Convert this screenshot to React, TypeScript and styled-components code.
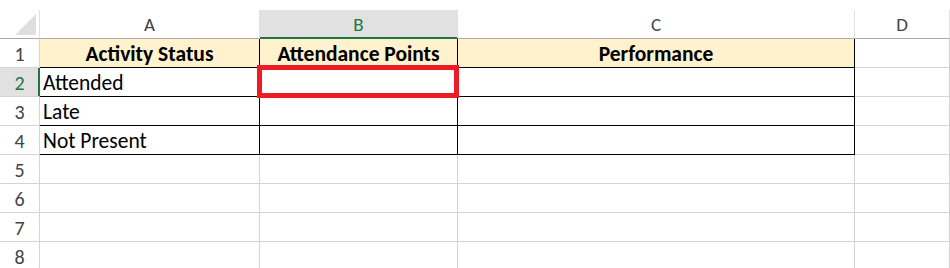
import React from "react";
import styled, { createGlobalStyle, css } from "styled-components";

const Global = createGlobalStyle`
  html, body { margin: 0; padding: 0; background: #fff; overflow: hidden; }
  body { width: 950px; height: 268px; font-family: Carlito, Lato, "Liberation Sans", sans-serif; }
`;

const GRID = "#d4d4d4";
const HEAD_LINE = "#e1e1e1";
const HEAD_BOTTOM = "#ababab";
const GREEN = "#217346";

const Sheet = styled.div`
  margin-top: 10px;
  display: grid;
  grid-template-columns: 40px 220px 198px 397px 1fr;
  grid-auto-rows: 29px;
`;

const Corner = styled.div`
  box-sizing: border-box;
  border-right: 1px solid ${HEAD_LINE};
  border-bottom: 1px solid ${HEAD_BOTTOM};
  display: flex;
  align-items: flex-end;
  justify-content: flex-end;
  padding: 0 3px 3px 0;
`;

const ColHeader = styled.div<{ $selected?: boolean }>`
  box-sizing: border-box;
  border-right: 1px solid ${HEAD_LINE};
  border-bottom: 1px solid ${HEAD_BOTTOM};
  display: flex;
  align-items: center;
  justify-content: center;
  font-size: 19px;
  color: #444;
  padding-top: 1px;
  ${(p) =>
    p.$selected &&
    css`
      background: #e1e1e1;
      color: ${GREEN};
      border-bottom: 2px solid ${GREEN};
      padding-top: 2px;
    `}
`;

const RowHeader = styled.div<{ $selected?: boolean }>`
  box-sizing: border-box;
  border-right: 1px solid ${GRID};
  border-bottom: 1px solid ${GRID};
  display: flex;
  align-items: center;
  justify-content: center;
  font-size: 20px;
  color: #444;
  padding-top: 2px;
  ${(p) =>
    p.$selected &&
    css`
      background: #e1e1e1;
      color: ${GREEN};
      box-shadow: inset -1px 0 0 ${GREEN};
      border-right-color: ${GREEN};
    `}
`;

const Cell = styled.div<{ $table?: boolean; $head?: boolean }>`
  position: relative;
  box-sizing: border-box;
  border-right: 1px solid ${(p) => (p.$table ? "#000" : GRID)};
  border-bottom: 1px solid ${(p) => (p.$table ? "#000" : GRID)};
  display: flex;
  align-items: center;
  padding: 2px 0 0 3px;
  font-size: 21.5px;
  color: #000;
  white-space: nowrap;
  ${(p) =>
    p.$head &&
    css`
      background: #fff2cc;
      font-weight: 700;
      justify-content: center;
      padding-left: 0;
    `}
`;

const Selection = styled.div`
  position: absolute;
  top: -3px;
  left: -3px;
  right: -2px;
  bottom: -2px;
  border: 5px solid #ed1c24;
  z-index: 2;
`;

const cols = ["A", "B", "C", "D"];
const headers = ["Activity Status", "Attendance Points", "Performance"];
const statuses = ["Attended", "Late", "Not Present"];

export default function App() {
  return (
    <>
      <Global />
      <Sheet>
        <Corner>
          <svg width="21" height="21" viewBox="0 0 21 21">
            <polygon points="21,0 21,21 0,21" fill="#dfdfdf" />
          </svg>
        </Corner>
        {cols.map((c) => (
          <ColHeader key={c} $selected={c === "B"}>
            {c}
          </ColHeader>
        ))}

        <RowHeader>1</RowHeader>
        {headers.map((h) => (
          <Cell key={h} $table $head>
            {h}
          </Cell>
        ))}
        <Cell />

        {statuses.map((s, i) => (
          <React.Fragment key={s}>
            <RowHeader $selected={i === 0}>{i + 2}</RowHeader>
            <Cell $table>{s}</Cell>
            <Cell $table>{i === 0 && <Selection />}</Cell>
            <Cell $table />
            <Cell />
          </React.Fragment>
        ))}

        {[5, 6, 7, 8].map((n) => (
          <React.Fragment key={n}>
            <RowHeader>{n}</RowHeader>
            <Cell />
            <Cell />
            <Cell />
            <Cell />
          </React.Fragment>
        ))}
      </Sheet>
    </>
  );
}
